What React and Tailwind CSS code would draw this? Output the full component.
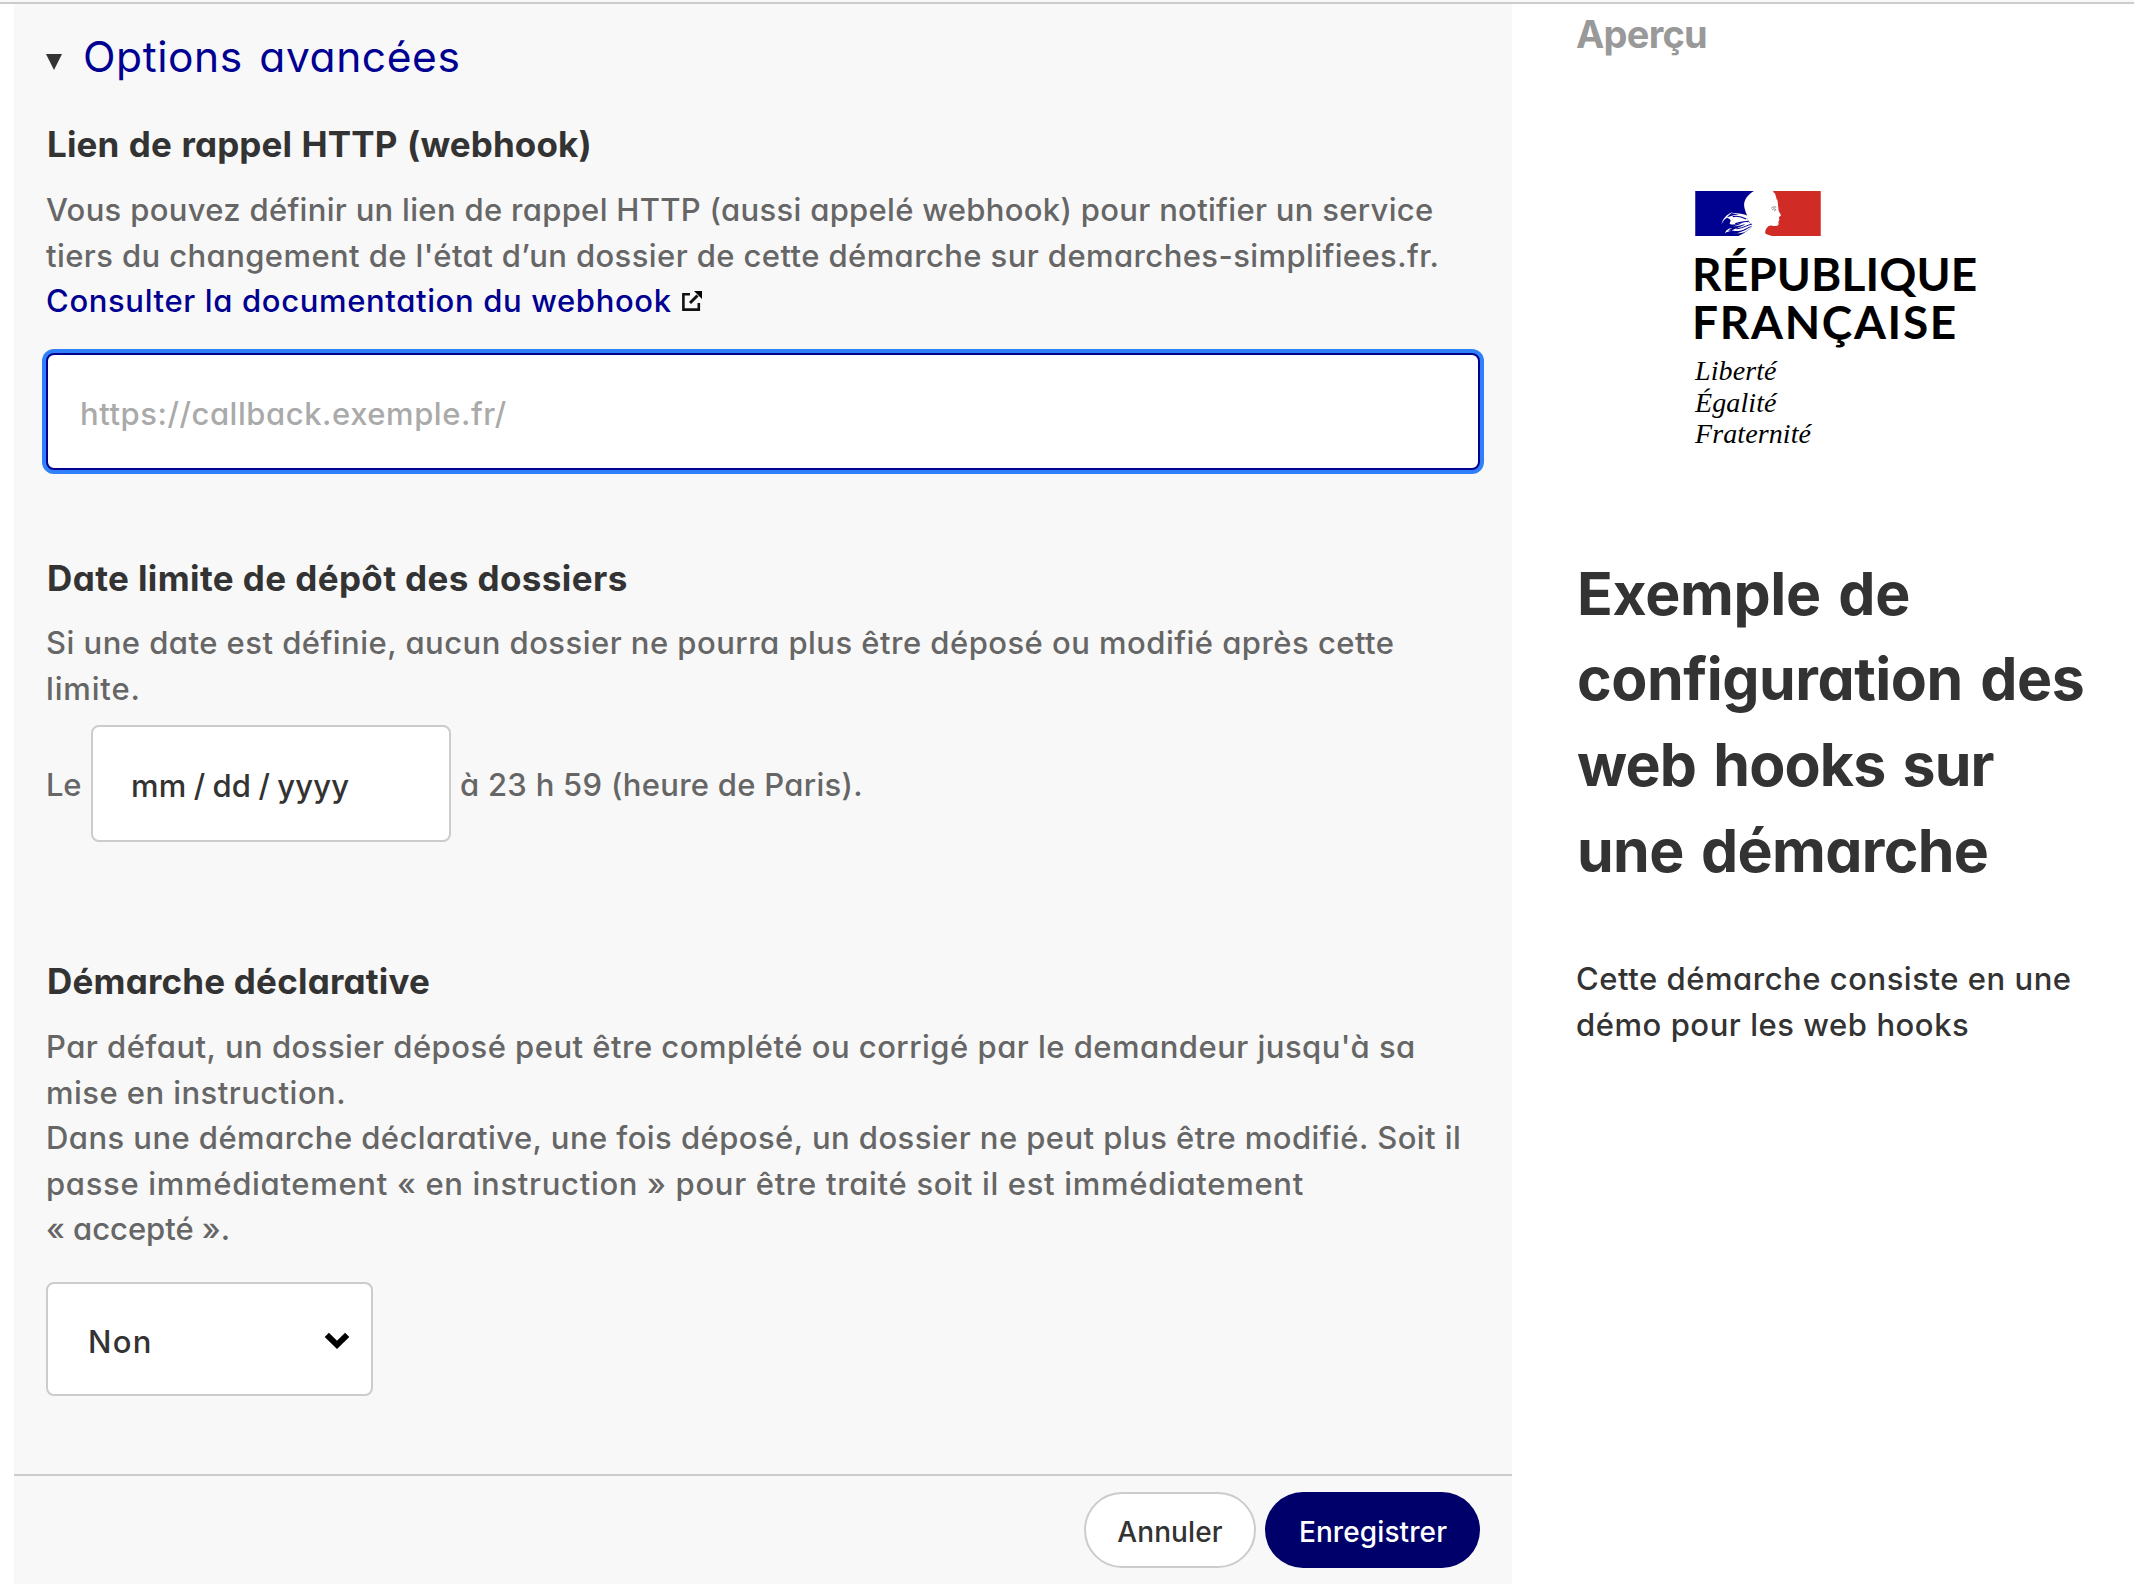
import React from "react";

function Line({ className = "", children }) {
  return <span className={"block whitespace-nowrap " + className}>{children}</span>;
}

function SectionTitle({ className = "", children }) {
  return (
    <h3 className={"whitespace-nowrap pl-px text-[35px] leading-[46px] font-[650] text-[#333] " + className}>
      {children}
    </h3>
  );
}

function ExternalLinkIcon() {
  return (
    <svg className="ml-[10px] size-5" viewBox="0 0 20 20" fill="none" stroke="#111">
      <path d="M8 3.2H1.4V18.6H16.8V12" strokeWidth="2.6" />
      <path d="M8 12L15.5 4.5" strokeWidth="3" />
      <path d="M12 0H20V8Z" fill="#000" stroke="none" />
    </svg>
  );
}

function MarianneFlag() {
  return (
    <svg className="block h-[45px] w-[126px]" viewBox="0 0 125.5 45">
      <path
        d="M0 0H58.7C55 2 51.5 5.5 50 8.8C48.4 12 48.6 15 49.7 18.8C50.3 21 51 23 52 24.5C51 27 53 30 57 34.3C56 38 51 40.5 48 42.5L43 45H0Z"
        fill="#000091"
      />
      <path
        d="M78 0H125.5V45H77C74 44 71.5 43.6 70 42.2C69.8 39.5 70.6 38 71.8 36.8C73 34.8 75 34.3 77 34.7C79.5 35.3 82.6 35 83.2 33.5C83.7 32.3 82.8 31.3 83.3 30.4C84.4 29.6 83.6 28.9 84.2 28.1C83.6 27.3 83.4 26.5 84 25.7C85.2 25.2 85.9 24.6 85.5 23.8C84.5 21.8 83.2 20.3 83.2 18C83.3 16 82.4 14.4 82.7 12.5C82.2 11 82.5 9.6 82 8.6C80.4 8.2 81.8 6.6 80.6 6C81 4.6 79.6 4.3 80 2.8C79.5 1.6 77.4 1.6 78 0Z"
        fill="#d12b25"
      />
      <g fill="#fff">
        <path d="M26.3 33.2C27 28.5 31.5 22.6 38 21C34.5 23 32.5 25 31.4 27C29.3 28 27.4 30.3 26.3 33.2Z" />
        <path d="M31 26.6C36 25.3 39 23.5 44 23.2C39 23 35.5 22.6 33.5 24.2C39 20.6 47 22.6 52.5 24.8L52.5 30.2C47 31 43 33.5 36 33.6C33.6 33.4 34.6 31.6 35.2 30.6C35.8 29.6 35 27.8 31 26.6Z" />
        <path d="M29.8 42.3C30.4 39.2 33 37.2 37.2 37.2C35 38 33.6 38.8 32.8 39.8C34.2 39.6 35.2 39.6 36.2 40C33.4 40.2 31.4 40.8 29.8 42.3Z" />
        <path d="M36.4 40C40 36.4 46 36.6 50 33C46 34.3 43 35.4 38 35.2C44 34.6 48 30.8 52 29.6L57.4 34.4C52 36.2 48 39.6 43 40C40.4 40.2 38.4 39.4 36.4 40Z" />
        <path d="M38 42.6C43 42 51 39.5 57.2 34.4C53 40.4 48 41.8 44 42.2C42 42.4 40 42.2 38 42.6Z" />
      </g>
      <path d="M37.5 25.6C42 24.6 46 25.4 51 28" stroke="#000091" strokeWidth="1.2" fill="none" />
      <path d="M40 32.6C46 31.6 49 30 53 30.6" stroke="#000091" strokeWidth="1.2" fill="none" />
      <path d="M41 37.8C49 36.8 52 34 56.5 33.2" stroke="#000091" strokeWidth="1" fill="none" />
      <path d="M76 17.2C77.6 15.6 79.6 15.8 81 16.2M77 18.6C78.4 17.6 79.8 17.8 80.6 18.6C80 19.6 79.6 20 79 20" stroke="#777" strokeWidth="0.9" fill="none" />
    </svg>
  );
}

export default function App() {
  return (
    <div className="flex h-[1584px] w-[2134px] flex-col overflow-hidden bg-white font-['Inter',sans-serif] text-[31px] font-[450] text-[#333] [font-feature-settings:'cv11']">
      <div className="h-1 shrink-0 border-b-2 border-[#ccc] bg-[#f8f8f8]" />
      <div className="flex flex-1">
        <main className="ml-[14px] flex w-[1498px] shrink-0 flex-col bg-[#f8f8f8]">
          <div className="px-8 pt-[22px]">
            <div className="flex h-[60px] items-center">
              <svg className="mt-[12px] size-4" viewBox="0 0 16 16">
                <path d="M0 0H16L8 16Z" fill="#333" />
              </svg>
              <h2 className="ml-[21px] whitespace-nowrap pt-px text-[42.5px] leading-[60px] font-normal tracking-[0.58px] text-[#000091] [word-spacing:4px]">
                Options avancées
              </h2>
            </div>

            <SectionTitle className="mt-[35px] tracking-[0.13px] [word-spacing:1px]">
              Lien de rappel HTTP (webhook)
            </SectionTitle>
            <p className="mt-5 leading-[45.5px] text-[#666]">
              <Line className="tracking-[0.31px]">
                Vous pouvez définir un lien de rappel HTTP (aussi appelé webhook) pour notifier un service
              </Line>
              <Line className="tracking-[0.405px]">
                tiers du changement de l'état d’un dossier de cette démarche sur demarches-simplifiees.fr.
              </Line>
              <a className="flex items-center whitespace-nowrap tracking-[0.64px] text-[#000091]">
                Consulter la documentation du webhook
                <ExternalLinkIcon />
              </a>
            </p>
            <input
              className="mt-[29.5px] block h-[117px] w-full rounded-lg border-2 border-[#000091] bg-white px-8 pt-1 tracking-[0.55px] ring-4 ring-[#3080fb] placeholder:text-[#aaa] placeholder:opacity-100"
              placeholder="https://callback.exemple.fr/"
            />

            <SectionTitle className="mt-[85px] tracking-[0.4px]">Date limite de dépôt des dossiers</SectionTitle>
            <p className="mt-[19px] leading-[45.5px] text-[#666]">
              <Line className="tracking-[0.47px]">
                Si une date est définie, aucun dossier ne pourra plus être déposé ou modifié après cette
              </Line>
              <Line className="tracking-[0.85px]">limite.</Line>
            </p>
            <div className="mt-[14px] flex items-center text-[#666]">
              <span className="w-[45px] pt-[3px] tracking-[-0.3px]">Le</span>
              <span className="flex h-[117px] w-[360px] items-center whitespace-pre rounded-lg border-2 border-[#ccc] bg-white pt-[6px] pl-[38px] tracking-[0.1px] text-[#333] [word-spacing:-1px]">
                mm / dd / yyyy
              </span>
              <span className="ml-[9px] whitespace-nowrap pt-[3px] tracking-[0.28px]">
                à 23 h 59 (heure de Paris).
              </span>
            </div>

            <SectionTitle className="mt-[116px] tracking-[0.2px]">Démarche déclarative</SectionTitle>
            <p className="mt-5 leading-[45.6px] text-[#666]">
              <Line className="tracking-[0.48px]">
                Par défaut, un dossier déposé peut être complété ou corrigé par le demandeur jusqu'à sa
              </Line>
              <Line className="tracking-[0.45px]">mise en instruction.</Line>
              <Line className="tracking-[0.435px]">
                Dans une démarche déclarative, une fois déposé, un dossier ne peut plus être modifié. Soit il
              </Line>
              <Line className="tracking-[0.69px]">
                passe immédiatement « en instruction » pour être traité soit il est immédiatement
              </Line>
              <Line className="tracking-[-0.03px]">« accepté ».</Line>
            </p>
            <div className="mt-[30px] flex h-[114px] w-[327px] items-center justify-between rounded-lg border-2 border-[#ccc] bg-white pr-[21px] pl-[40px]">
              <span className="pt-[6px] tracking-[1.3px]">Non</span>
              <svg className="mt-1 h-[18px] w-[26px]" viewBox="0 0 26 18">
                <path d="M2.8 2.8L13 12.8L23.2 2.8" stroke="#000" strokeWidth="6" strokeLinejoin="miter" fill="none" />
              </svg>
            </div>
          </div>

          <div className="mt-[78px] flex flex-1 items-start justify-end gap-[9px] border-t-2 border-[#ccc] pt-4 pr-8 text-[28px] tracking-[0.1px]">
            <button className="h-[76px] w-[172px] rounded-full border-2 border-[#ccc] bg-white pt-[5px]">Annuler</button>
            <button className="h-[76px] w-[215px] rounded-full bg-[#00006b] pt-[5px] pl-px text-white">Enregistrer</button>
          </div>
        </main>

        <aside className="ml-[64px] flex-1 pt-[6px]">
          <h4 className="text-[38px] leading-[48px] font-[650] tracking-[-0.75px] text-[#999]">Aperçu</h4>
          <div className="mt-[133px] ml-[119px] text-black">
            <MarianneFlag />
            <div className="mt-[14px] ml-[-3px] font-['Lato',sans-serif] text-[46px] leading-[48px] font-bold">
              <Line className="tracking-[0.1px]">RÉPUBLIQUE</Line>
              <Line className="tracking-[1.7px]">FRANÇAISE</Line>
            </div>
            <div className="mt-[9px] font-['Liberation_Serif',serif] text-[28px] leading-[31.5px] font-normal tracking-[0.1px] italic">
              <Line>Liberté</Line>
              <Line>Égalité</Line>
              <Line>Fraternité</Line>
            </div>
          </div>
          <h1 className="mt-[101px] pl-px text-[59px] leading-[85.7px] font-[650] [word-spacing:4px]">
            <Line className="tracking-[-0.35px]">Exemple de</Line>
            <Line className="tracking-[-0.47px]">configuration des</Line>
            <Line className="tracking-[-0.85px]">web hooks sur</Line>
            <Line className="tracking-[-0.65px]">une démarche</Line>
          </h1>
          <p className="mt-[63px] leading-[46px]">
            <Line className="tracking-[0.53px]">Cette démarche consiste en une</Line>
            <Line className="tracking-[0.55px]">démo pour les web hooks</Line>
          </p>
        </aside>
      </div>
    </div>
  );
}
